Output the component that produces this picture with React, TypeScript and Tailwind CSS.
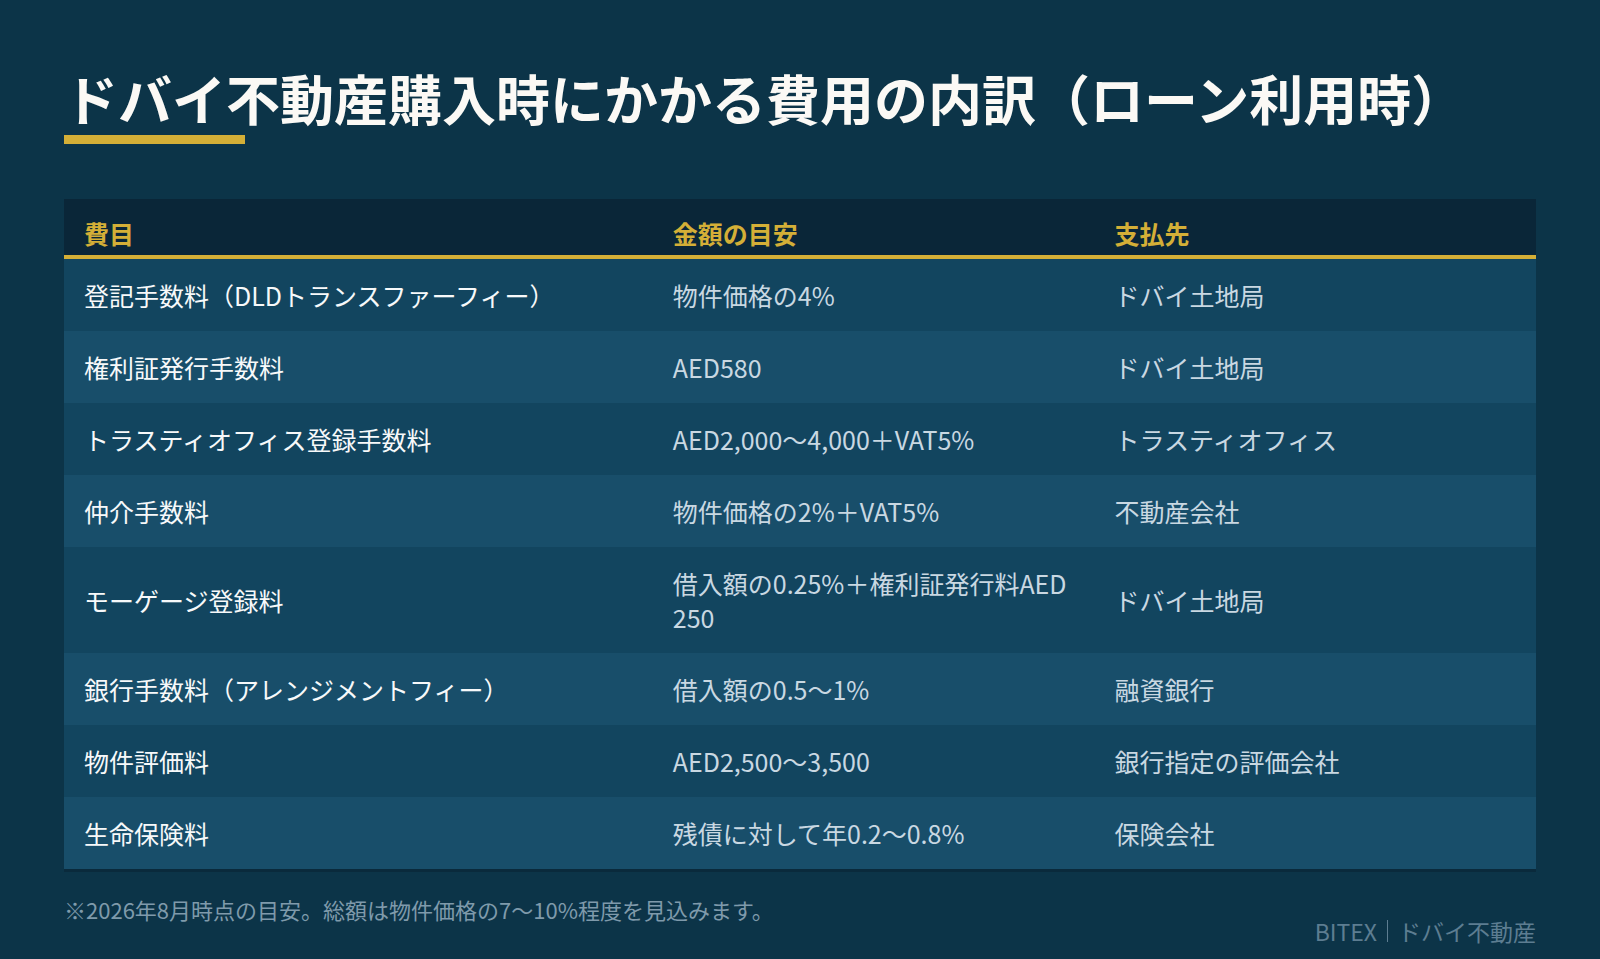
import React from "react";

const rows: [string, string, string][] = [
  ["登記手数料（DLDトランスファーフィー）", "物件価格の4%", "ドバイ土地局"],
  ["権利証発行手数料", "AED580", "ドバイ土地局"],
  ["トラスティオフィス登録手数料", "AED2,000〜4,000＋VAT5%", "トラスティオフィス"],
  ["仲介手数料", "物件価格の2%＋VAT5%", "不動産会社"],
  ["モーゲージ登録料", "借入額の0.25%＋権利証発行料AED 250", "ドバイ土地局"],
  ["銀行手数料（アレンジメントフィー）", "借入額の0.5〜1%", "融資銀行"],
  ["物件評価料", "AED2,500〜3,500", "銀行指定の評価会社"],
  ["生命保険料", "残債に対して年0.2〜0.8%", "保険会社"],
];

export default function App() {
  return (
    <div
      className="w-[1600px] h-[959px] bg-[#0c3448] px-16 pt-[62px] flex flex-col"
      style={{ fontFamily: '"Noto Sans CJK JP", "Noto Sans", sans-serif' }}
    >
      <h1 className="text-[54px] leading-[72px] font-bold text-[#fbf9f5]">
        ドバイ不動産購入時にかかる費用の内訳（ローン利用時）
      </h1>
      <div className="mt-[1px] w-[181px] h-[9px] bg-[#d4af37]" />

      <div className="mt-[55px] w-[1472px] border-b-[3px] border-[#0a2a3c]">
        <div className="grid grid-cols-[40%_30%_30%] bg-[#0a2638] border-b-4 border-[#d4af37] h-[60px]">
          {["費目", "金額の目安", "支払先"].map((h) => (
            <div key={h} className="px-5 pt-[17px] text-[25px] leading-[34px] font-bold text-[#d4af37]">
              {h}
            </div>
          ))}
        </div>
        {rows.map((r, i) => (
          <div
            key={i}
            className={`grid grid-cols-[40%_30%_30%] items-center ${
              i % 2 === 0 ? "bg-[#12455f]" : "bg-[#184e6a]"
            }`}
          >
            <div className="px-5 py-[19px] text-[25px] leading-[34px] text-[#f7f9fa]">{r[0]}</div>
            <div className="px-5 py-[19px] text-[25px] leading-[34px] text-[#c9d8e2]">{r[1]}</div>
            <div className="px-5 py-[19px] text-[25px] leading-[34px] text-[#c9d8e2]">{r[2]}</div>
          </div>
        ))}
      </div>

      <div className="mt-[21px] text-[22px] leading-[32px] text-[#7f9aab]">
        ※2026年8月時点の目安。総額は物件価格の7〜10%程度を見込みます。
      </div>
      <div className="flex justify-end items-center mt-[-10px] text-[23px] leading-[32px] text-[#5d7d91]">
        <span>BITEX</span>
        <span className="mx-[10px] w-px h-[22px] bg-[#5d7d91]" />
        <span>ドバイ不動産</span>
      </div>
    </div>
  );
}
